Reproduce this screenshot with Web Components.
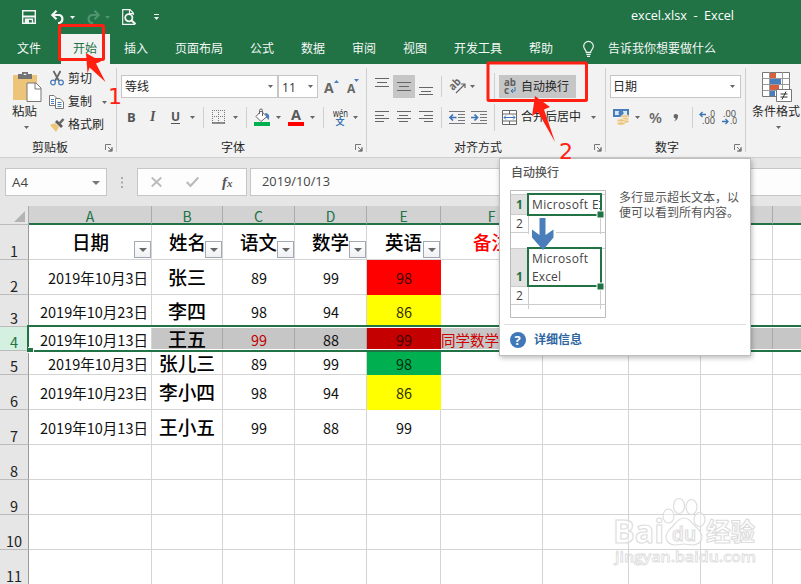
<!DOCTYPE html>
<html lang="zh-CN">
<head>
<meta charset="utf-8">
<title>excel.xlsx - Excel</title>
<style>
body{margin:0;width:801px;height:584px;overflow:hidden;font:12px/16px "Open Sans","Noto Sans CJK SC",sans-serif;color:#262626;background:#fff}
</style>
</head>
<body>
<xl-window></xl-window>
<script>
const define=(name,css,html,after)=>customElements.define(name,class extends HTMLElement{
  constructor(){super();this.attachShadow({mode:'open'});}
  connectedCallback(){
    this.shadowRoot.innerHTML=`<style>:host{display:block;box-sizing:border-box}*{box-sizing:border-box}${css}</style>`+(typeof html==='function'?html(this):html);
    if(after)after(this);
  }
});
// Lays out items left to right; each item is [x, width, markup], gaps become margins.
const row=(x0,h,items,cls='')=>{let x=x0;return `<div class="row ${cls}" style="height:${h}px">`+items.map(([a,w,m])=>{const g=a-x;x=a+w;return `<div class="it" style="margin-left:${g}px;width:${w}px">${m}</div>`}).join('')+'</div>'};
const rowCss='.row{display:flex;align-items:center;white-space:nowrap}.it{flex:none;display:flex;align-items:center;justify-content:flex-start}svg{display:block;flex:none;overflow:visible}';
const T=(s,w,st='')=>`<fit-text w="${w}" style="${st}">${s}</fit-text>`;
const svg=(w,h,c)=>`<svg width="${w}" height="${h}" viewBox="0 0 ${w} ${h}" fill="none">${c}</svg>`;
const dd=(c='#666')=>svg(5,3,`<path d="M0 0h5L2.5 3z" fill="${c}"/>`);
const vsep=h=>`<div style="width:1px;height:${h}px;background:#d0d0d0"></div>`;
const lines=(spec,h=16,w=14)=>svg(w,h,spec.map(([x,y,l])=>`<path d="M${x} ${y+.5}h${l}" stroke="#666"/>`).join(''));
const launcher=svg(8,8,'<path d="M.5 6V.5H6M3 3l4 4M7 3v4H3" stroke="#777"/><path d="M7.5 3.5v4h-4z" fill="#777"/>');

define('xl-titlebar','svg{color:#fff}:host{background:#217346;height:34px;color:#fff}'+rowCss,
 row(0,34,[
  [22,14,svg(14,14,'<path d="M.7.7h12.6v12.6H.7z" stroke="#f5f5f5" stroke-width="1.4"/><path d="M1 6.5h12" stroke="#f5f5f5" stroke-width="2"/><path d="M3.5 13V9.3h7V13" stroke="#f5f5f5" stroke-width="1.4"/><path d="M4 10h3v3H4z" fill="#f5f5f5"/>')],
  [51,14,svg(14,14,'<path d="M2 5h6.5a4.2 4.2 0 0 1 0 8H7" stroke="#f5f5f5" stroke-width="2.2"/><path d="M5.5.7 1.3 5l4.2 4.3" stroke="#f5f5f5" stroke-width="2.2"/>')],
  [70,5,dd('#f5f5f5')],
  [86,14,svg(14,14,'<path d="M12 5H5.5a4.2 4.2 0 0 0 0 8H7" stroke="#4f9470" stroke-width="2.2"/><path d="M8.5.7 12.7 5 8.5 9.3" stroke="#4f9470" stroke-width="2.2"/>')],
  [105,5,dd('#4f9470')],
  [122,14,svg(14,16,'<path d="M13 15.3H.7V.7H8l3.3 3.3v2M7.5 1v3.5H11" stroke="#f5f5f5" stroke-width="1.2"/><circle cx="6.8" cy="8.7" r="3.6" stroke="#f5f5f5" stroke-width="1.8"/><path d="m9.5 11.3 4 4" stroke="#f5f5f5" stroke-width="2.2"/>')],
  [154,5,svg(5,6,'<path d="M0 .5h5" stroke="#f5f5f5"/><path d="M0 3h5L2.5 6z" fill="#f5f5f5"/>')],
  [631,104,'<div style="padding-bottom:3px">'+T('excel.xlsx&nbsp; -&nbsp; Excel',103)+'</div>']
 ]));

const tab=(x,s,w)=>[x,w,T(s,w)];
define('xl-tabs',':host{background:#217346;height:30px;color:#f4f8f5}'+rowCss+'.on{background:#f2f2f2;color:#217346;width:49px;height:30px;display:flex;align-items:center;padding-left:12px}.row{padding-bottom:1px}',
 row(0,30,[
  tab(17,'文件',24),[61,49,'<div class="on" style="position:relative;top:.5px">'+T('开始',24)+'</div>'],tab(124,'插入',24),tab(175,'页面布局',48),tab(250,'公式',24),tab(301,'数据',24),tab(352,'审阅',24),tab(403,'视图',24),tab(454,'开发工具',48),tab(529,'帮助',24),
  [583,12,svg(11,16,'<path d="M3.3 11.3C3.3 9 .7 8 .7 5.2a4.8 4.8 0 0 1 9.6 0c0 2.8-2.6 3.8-2.6 6.1zM3.3 13.3h4.4M4 15.3h3" stroke="#f4f8f5" stroke-width="1.2"/>')],
  tab(608,'告诉我你想要做什么',108)
 ]));

define('xl-group',`:host{height:84px;flex:none;border-right:1px solid #cfcfcf}`,'<slot></slot>');

const gpaste='<svg width="28" height="30" viewBox="0 0 28 30" style="display:block"><path d="M0 3h24v25H0z" fill="#edc578"/><path d="M5 2h4V0h6v2h4v5H5z" fill="#737373"/><path d="M10.5 3a1.5 1.5 0 0 1 3 0" fill="#f2f2f2"/><path d="M14 11h9l5 5v13.500H14z" fill="#fff" stroke="#777"/><path d="M22 11v6h6" fill="none" stroke="#777"/></svg>';
define('xl-clipboard',rowCss+`:host{display:block}.top{display:flex;height:71px}.p{width:37px;padding:4px 0 0 12px;margin-right:12px;flex:none}`,
 `<div class="top"><div class="p"><div style="margin-left:1px">${gpaste}</div><div style="margin-top:2px">${T('粘贴',25)}</div><div style="padding:6px 0 0 12px">${dd()}</div></div>
 <div class="r">${row(49,21,[[50,14,svg(14,15,'<path d="m3.500 0 5.500 10M10.500 0 5 10" stroke="#666" stroke-width="1.8"/><circle cx="3" cy="11.500" r="2.300" stroke="#4a7ebb" stroke-width="1.300"/><circle cx="11" cy="11.500" r="2.300" stroke="#4a7ebb" stroke-width="1.300"/>')],[68,24,T('剪切',24)]])}
 ${row(49,26,[[49,16,svg(15,14,'<path d="M.5.5H5l2.500 2.500v7.500H.5z" fill="#fff" stroke="#777"/><path d="M6.500 3.500H11l3.500 3.500v6.500h-8z" fill="#fff" stroke="#777"/><path d="M2 4.500h3M2 6.500h3M2 8.500h3M8.500 7.500h4M8.500 9.500h4M8.500 11.500h4" stroke="#4a7ebb"/>')],[68,24,T('复制',24)],[102,5,dd()]])}
 ${row(49,20,[[50,15,svg(15,14,'<path d="M0 7 5 5l4 4-3 5z" fill="#edc578"/><path d="m5 4 2-2 6 6-2 2z" fill="#5c5c5c"/><path d="m9 6 4.500-5" stroke="#666" stroke-width="2.500"/>')],[68,36,T('格式刷',36)]])}</div></div>
 ${row(0,18,[[32,36,T('剪贴板',36)],[105,8,launcher]])}`);

define('xl-font',rowCss+`.box{height:23px;background:#fff;border:1px solid #c6c6c6;display:flex;align-items:center;padding:0 4px 0 3px;justify-content:space-between;width:100%}
 .b{font:bold 13px/16px "Open Sans";color:#555}.r2{margin-top:7px}.g{margin-top:10px}.pin{display:flex;flex-direction:column;align-items:center;width:16px;line-height:9px}`,
 `<div style="height:7px"></div>`+row(117,23,[
  [121,157,'<div class="box">'+T('等线',24)+dd()+'</div>'],[278,40,'<div class="box">'+T('11',14,'font-size:13px;color:#333')+dd()+'</div>'],
  [324,10,`<b style="font:bold 14px/16px 'Open Sans';color:#666;padding-top:2px">A</b>`],[334,5,'<div style="padding-bottom:11px">'+svg(5,3,'<path d="M0 3h5L2.500 0z" fill="#4a7ebb"/>')+'</div>'],
  [347,7,`<b style="font:bold 12px/16px 'Open Sans';color:#666;padding-top:4px">A</b>`],[354,5,'<div style="padding-bottom:13px">'+dd('#4a7ebb')+'</div>']
 ])+row(117,24,[
  [127,9,'<b class="b">B</b>'],[149,9,'<i style="font:italic bold 14px/16px \'Liberation Serif\';color:#555;margin-left:1px">I</i>'],[171,9,'<span class="b" style="border-bottom:1px solid #555;line-height:13px;font-size:12px">U</span>'],[190,5,dd()],[203,1,vsep(21)],
  [212,14,svg(13,14,'<path d="M0 .5h13M0 6.500h13M.5 0v13M6.500 0v13M12.500 0v13" stroke="#777" stroke-dasharray="1 1"/><path d="M0 13h13" stroke="#555" stroke-width="1.300"/>')],[233,5,dd()],[246,1,vsep(21)],
  [254,16,svg(16,16,'<path d="m7 2 6 5.500-6 5L2 7.500z" fill="#fff" stroke="#666"/><path d="M5.500 5V1.500a1.500 1.500 0 0 1 3 0V7" stroke="#666"/><path d="M11 4c4 0 5 3 3.500 7L12 8z" fill="#4a7ebb"/><path d="M0 13h16v4H0z" fill="#00b050"/>')],[276,5,dd()],
  [288,16,svg(16,16,'<path d="M0 13h16v4H0z" fill="red"/><text x="3" y="11" font-family="Open Sans" font-weight="bold" font-size="14" fill="#595959" textLength="10" lengthAdjust="spacingAndGlyphs">A</text>')],[310,5,dd()],[323,1,vsep(21)],
  [332,16,`<div class="pin">${T('wén',15,'font-size:10px;line-height:8px')}<span style="font-size:9px;color:#3b74b5;font-weight:bold;font-family:'Noto Sans CJK SC'">文</span></div>`],[353,5,dd()]
 ],'r2')+row(117,18,[[221,24,T('字体',24)],[355,8,launcher]],'g'));

define('xl-align',rowCss+`.r2{margin-top:7px}.g{margin-top:10px}.on{background:#c6c6c6;height:23px;display:flex;align-items:center;width:100%}`,
 `<div style="height:7px"></div>`+row(367,23,[
  [375,14,lines([[0,0,14],[2,4,10],[0,8,14]],17)],[393,22,'<div class="on" style="padding-left:4px">'+lines([[0,0,14],[2,4,10],[0,8,14]],9)+'</div>'],[419,14,lines([[0,8,14],[2,12,10],[0,15,14]],16)],
  [441,1,vsep(21)],[449,17,svg(17,15,'<g transform="translate(4 12) rotate(-45)"><text x="0" y="0" font-size="11" font-weight="bold" font-family="Open Sans" fill="#666" textLength="12" lengthAdjust="spacingAndGlyphs">ab</text></g><path d="m7 14 9-9M12 5h4v4" stroke="#666" stroke-width="1.200"/>')],[470,5,dd()],[494,1,vsep(27)],
  [499,77,`<div class="on">${row(499,23,[[503,14,svg(14,15,'<g font-family="Open Sans" font-weight="bold" font-size="10" fill="#5f5f5f"><text x="1" y="7" textLength="12" lengthAdjust="spacingAndGlyphs">ab</text><text x="1" y="14.500">c</text></g><path d="M12 8v4H8M10 10l-2 2 2 2" stroke="#3b74b5"/>')],[521,48,T('自动换行',48)]])}</div>`]
 ])+row(367,24,[
  [375,14,lines([[0,0,14],[0,4,9],[0,7,14],[0,10,9]],12)],[397,14,lines([[0,0,14],[2,4,9],[0,7,14],[2,10,9]],12)],[419,14,lines([[0,0,14],[5,4,9],[0,7,14],[5,10,9]],12)],[441,1,vsep(21)],
  [449,16,svg(16,13,'<path d="M0 .5h16M9 3.500h7M9 6.500h7M9 9.500h7M0 12.500h16" stroke="#777"/><path d="M7.500 6.500H1M4 3.500l-3 3 3 3" stroke="#3b74b5" stroke-width="1.700"/>')],
  [471,16,svg(16,13,'<path d="M0 .5h16M9 3.500h7M9 6.500h7M9 9.500h7M0 12.500h16" stroke="#777"/><path d="M0 6.500h6.500M3.500 3.500l3 3-3 3" stroke="#3b74b5" stroke-width="1.700"/>')],[494,1,vsep(27)],
  [502,15,svg(15,15,'<path d="M.5.5h14v14H.5zM0 4h15M0 11h15M7.500 0v4M7.500 11v4" fill="#fff" stroke="#666"/><path d="M2 7.500h11M4 5.500l-2 2 2 2M11 5.500l2 2-2 2" stroke="#3b74b5"/>')],[521,60,T('合并后居中',60)],[591,5,dd()]
 ],'r2')+row(367,18,[[454,48,T('对齐方式',48)],[594,8,launcher]],'g'));

const dec=(a,b,l)=>svg(15,15,`<g font-family="Open Sans" font-size="9" fill="#444"><text x="${l?8:1}" y="7" textLength="${l?7:13}" lengthAdjust="spacingAndGlyphs">${a}</text><text x="${l?2:8}" y="14" textLength="${l?13:7}" lengthAdjust="spacingAndGlyphs">${b}</text></g>`+(l?'<path d="M6 4.500H0M2.500 2 0 4.500 2.500 7" stroke="#3b74b5" stroke-width="1.300"/>':'<path d="M0 11.500h6M3.500 9l2.500 2.500L3.500 14" stroke="#3b74b5" stroke-width="1.300"/>'));
define('xl-number',rowCss+`.r2{margin-top:7px}.g{margin-top:10px}.box{height:23px;background:#fff;border:1px solid #c6c6c6;display:flex;align-items:center;padding:0 5px 0 2px;justify-content:space-between;width:100%}`,
 `<div style="height:7px"></div>`+row(606,23,[[610,131,'<div class="box">'+T('日期',24)+dd()+'</div>']])+row(606,24,[
  [613,17,svg(16,16,'<path d="M0 0h16v8H0z" fill="#4a7ebb"/><path d="M2 2h12v4H2z" fill="#dce8f5"/><circle cx="8" cy="4" r="2.500" fill="#4a7ebb"/><g fill="#edc578" stroke="#f2f2f2" stroke-width=".7"><ellipse cx="12" cy="7.500" rx="4" ry="1.700"/><ellipse cx="12" cy="10" rx="4" ry="1.700"/><ellipse cx="12" cy="12.500" rx="4" ry="1.700"/><ellipse cx="8" cy="11.500" rx="4" ry="1.700"/><ellipse cx="8" cy="14.500" rx="4" ry="1.700"/></g>')],[635,5,dd()],
  [649,13,T('%',13,'font-size:15px;font-weight:600;color:#666')],[673,6,svg(6,9,'<path d="M3 1a2 2 0 0 1 2 2.500C5 6 3 8 .7 8.500 2 7.500 2.700 6.500 2.600 5.500A2.200 2.200 0 0 1 3 1z" fill="#666"/>')],[692,1,vsep(21)],
  [700,15,dec('.0','.00',1)],[722,15,dec('.00','.0',0)]
 ],'r2')+row(606,18,[[655,24,T('数字',24)],[734,8,launcher]],'g'));

define('xl-styles','svg{display:block}:host{padding:4px 0 0 6px}',
 `<div style="padding-left:10px">${svg(30,30,'<path d="M.5.5h27v24H.5z" fill="#fff" stroke="#777"/><path d="M8 1h6v5H8z" fill="#d65f3f"/><path d="M8 7h11v5H8z" fill="#4a7ebb"/><path d="M8 13h9v5H8z" fill="#d65f3f"/><path d="M8 19h5v5H8z" fill="#4a7ebb"/><path d="M.5 6.500h27M.5 12.500h27M.5 18.500h14M7.500 0v24M20.500 0v24" stroke="#999"/><path d="M14.500 17.500h15v12h-15z" fill="#fff" stroke="#777"/><path d="M18.500 22h7M18.500 25h7M24 19.500l-4 8" stroke="#333"/>')}</div><div style="margin-top:2px">${T('条件格式',48)}</div><div style="padding:6px 0 0 24px">${dd()}</div>`);

define('xl-ribbon',':host{height:94px;background:#f2f2f2;border-bottom:1px solid #d0d0d0;display:flex;padding-top:4px}xl-styles{flex:1}',
 `<xl-group style="width:117px"><xl-clipboard></xl-clipboard></xl-group><xl-group style="width:250px"><xl-font></xl-font></xl-group><xl-group style="width:239px"><xl-align></xl-align></xl-group><xl-group style="width:140px"><xl-number></xl-number></xl-group><xl-styles></xl-styles>`);

define('xl-formula-bar',rowCss+`:host{height:48px;background:#e6e6e6;padding-top:10px}.box{width:100%;height:28px;background:#fdfdfd;border:1px solid #c6c6c6;display:flex;align-items:center}`,
 row(0,28,[
  [5,102,'<div class="box" style="justify-content:space-between;padding:1px 6px 0">'+T('A4',16,'color:#444;font-size:12px')+svg(8,4,'<path d="M0 0h8L4 4z" fill="#777"/>')+'</div>'],
  [121,2,svg(2,11,'<path d="M0 0h2v2H0zM0 4.500h2v2H0zM0 9h2v2H0z" fill="#aaa"/>')],
  [137,110,'<div class="box">'+row(138,26,[[151,11,svg(11,10,'<path d="m.7.500 9.600 9M10.300.5.7 9.500" stroke="#bbb" stroke-width="1.800"/>')],[186,13,svg(13,10,'<path d="m.8 5 3.700 4L12.300.5" stroke="#bbb" stroke-width="2.200"/>')],[222,14,`<i style="font:italic bold 15px/16px 'Liberation Serif';color:#555">f<span style="font-size:11px">x</span></i>`]])+'</div>'],
  [250,560,'<div class="box" style="padding-left:11px">'+T('2019/10/13',68,'font-size:12.5px;color:#444')+'</div>']
 ]));

const cols=[['A',123],['B',71],['C',72],['D',72],['E',74],['F',102],['G',86],['H',72],['I',72],['',72]];
const heights=[35,35,32,24,24,35,35,35,35,35,35];
const data=[
 ['日期','姓名','语文','数学','英语','备注'],
 ['2019年10月3日','张三','89','99','98'],['2019年10月23日','李四','98','94','86'],['2019年10月13日','王五','99','88','99','同学数学'],
 ['2019年10月3日','张儿三','89','99','98'],['2019年10月23日','李小四','98','94','86'],['2019年10月13日','王小五','99','88','99']];
const fills={1:'#f00',2:'#ff0',3:'#c40000',4:'#00b050',5:'#ff0'};
define('xl-cell',`:host{border-right:1px solid #d4d4d4;border-bottom:1px solid #d4d4d4;display:flex;align-items:center;justify-content:center;position:relative;white-space:nowrap;font:15px/20px "Noto Sans CJK SC",sans-serif;color:#111;overflow:visible;padding-top:2px}
 :host([kind=date]){justify-content:flex-end;padding-right:3px}
 :host([kind=name]){font-size:19px;font-weight:500;color:#000;padding-top:0}
 :host([kind=head]){font-size:19px;font-weight:500;color:#000;padding:0}
 .f{position:absolute;right:0;bottom:1px;width:17px;height:17px;border:1px solid #a3a9b3;background:linear-gradient(#fff,#f0f1f4);display:flex;align-items:center;justify-content:center}`,
 e=>'<slot></slot>'+(e.hasAttribute('filter')?'<span class="f">'+svg(8,4,'<path d="M0 0h8L4 4z" fill="#666"/>')+'</span>':''));

const cell=(r,c)=>{
 const v=(data[r]||[])[c]||'';let kind='',s='',t='';
 if(v){
  if(r===0){kind='head';t=T(v,37);if(c===5)s+='color:red;'}
  else if(c===0){kind='date';t=T(v,v.length>10?108:100)}
  else if(c===1){kind='name';t=T(v,v.length*19-(v.length>2?1:0))}
  else if(c===5){t=T(v,58);s+='color:#d00000;justify-content:flex-start;'}
  else t=T(v,16);
 }
 if(c===4&&fills[r])s+=`background:${fills[r]};border-color:${fills[r]};color:#400000;`+(r===4?'color:#002a10;':r===2||r===5?'color:#332f00;':'');
 if(r===3&&c>0&&c!==4)s+='background:#c6c6c6;border-right-color:#a8a8a8;';
 if(r===3&&c===2)s+='color:#c00000;';
 return `<xl-cell kind="${kind}" style="${s}" ${r===0&&c<5?'filter':''}>${t}</xl-cell>`;
};
define('xl-sheet',`:host{display:grid;position:relative;grid-template-columns:29px ${cols.map(c=>c[1]+'px').join(' ')};grid-template-rows:19px ${heights.map(h=>h+'px').join(' ')};height:378px;overflow:hidden;background:#fff}
 .ch{background:#d2d2d2;border-right:1px solid #ababab;border-bottom:2px solid #217346;color:#217346;text-align:center;font:14px/20px "Noto Sans CJK SC"}
 .rh{background:#e6e6e6;border-right:1px solid #999;border-bottom:1px solid #bbb;display:flex;align-items:flex-end;justify-content:center;font:14.5px/16px "Noto Sans CJK SC";color:#222}
 .corner{background:#e6e6e6;border-right:1px solid #ababab;border-bottom:1px solid #bbb;padding:5px 3px 0 14px}
 .sel{position:absolute;left:27px;top:119px;width:800px;height:27px;border:2px solid #217346;box-shadow:inset 0 0 0 1px #fff}
 .handle{position:absolute;left:28px;top:141px;width:6px;height:6px;background:#217346;border:1px solid #fff;border-left:0}svg{display:block}`,
 '<div class="corner">'+svg(11,11,'<path d="M11 0v11H0z" fill="#b4b4b4"/>')+'</div>'+cols.map(c=>`<div class="ch">${c[0]}</div>`).join('')+
 heights.map((h,r)=>`<div class="rh" ${r===3?'style="background:#d3f0e0;color:#217346"':''}>${r+1}</div>`+cols.map((_,c)=>cell(r,c)).join('')).join('')+'<div class="sel"></div><div class="handle"></div>');

define('xl-tip',rowCss+`:host{position:absolute;left:499px;top:158px;width:252px;height:198px;background:#fff;border:1px solid #bebebe;box-shadow:1px 2px 5px #0004;padding:6px 4px 0 10px;color:#555;display:flex;flex-direction:column}
 .m{display:flex;margin-top:9px;gap:13px}.foot{border-top:1px solid #ddd;margin:6px 0 0 -6px;padding:7px 0 0 6px;display:flex;gap:8px;align-items:center}`,
 T('自动换行',48,'font-weight:500;margin-left:1px')+`<div class="m">`+svg(96,128,`<path d="M.5.5h95v127H.5z" fill="#fff" stroke="#bbb"/><path d="M1 4h17v21H1zM1 58h17v38H1z" fill="#e1e1e1"/><path d="M1 4.500h17M1 24.500h17M1 42.500h18M1 58.500h17M1 96.500h17M1 114.500h94M18.500 4v40M18.500 58v61M90.500 4v40M90.500 96v23M46 42.500h49M91 4.500h4M91 24.500h4M91 58.500h4M91 96.500h4" stroke="#ccc"/><path d="M18 4h73v21H18zM18 58h73v38H18z" fill="#fff" stroke="#217346" stroke-width="2"/><path d="M87 21h7v7h-7zM87 93h7v7h-7z" fill="#217346" stroke="#fff"/>
 <path d="M29.500 28h6v17l8-5.500v8L33 60 22 47.500v-8l7.500 5.500z" fill="#4a7ebb"/>
 <g font-family="Open Sans" font-size="12" fill="#444"><text x="22" y="19" textLength="56">Microsoft</text><text x="82" y="19">E</text><path d="M89.500 11v1M89.500 18v1" stroke="#555"/><text x="22" y="73" textLength="56">Microsoft</text><text x="22" y="91" textLength="29">Excel</text><text x="6" y="38">2</text><text x="6" y="110">2</text><text x="6" y="19" font-weight="bold" fill="#217346">1</text><text x="6" y="91" font-weight="bold" fill="#217346">1</text></g>`)+`<div>${T('多行显示超长文本，以',120,'line-height:15px;display:block')}${T('便可以看到所有内容。',120,'line-height:15px;display:block')}</div></div>
 <div class="foot">${svg(16,16,'<circle cx="8" cy="8" r="8" fill="#3f78b8"/><text x="4.600" y="12.500" fill="#fff" font-family="Open Sans" font-weight="bold" font-size="13">?</text>')}${T('详细信息',48,'font-weight:600;color:#2f669f')}</div>`);

define('xl-watermark',':host{position:absolute;left:610px;top:495px;opacity:.9}svg{display:block}',
 svg(160,80,`<g fill="#fff" fill-opacity=".55" stroke="#d9d9d9" stroke-width="1.100" font-family="Open Sans" font-weight="bold"><text x="3" y="48" font-size="33" textLength="51" lengthAdjust="spacingAndGlyphs">Bai</text>
 <ellipse cx="58.500" cy="21" rx="5.500" ry="7"/><ellipse cx="69" cy="11" rx="5.500" ry="7.500"/><ellipse cx="81.500" cy="12" rx="5.500" ry="7.500"/><ellipse cx="89.500" cy="24.500" rx="5.500" ry="7"/><path d="M74 23c6 0 8 5 12 9 5 4 9 11 3 16-5 4-10 1-15 1s-11 3-15-1c-6-5-2-12 3-16 4-4 6-9 12-9z"/>
 <text x="62" y="46" font-size="19" textLength="24" lengthAdjust="spacingAndGlyphs" font-weight="600">du</text><text x="96" y="46" font-family="Noto Sans CJK SC" font-size="25" textLength="49" lengthAdjust="spacingAndGlyphs">经验</text><text x="5" y="67" font-size="15" font-weight="600" stroke-width=".8" textLength="141" lengthAdjust="spacingAndGlyphs">jingyan.baidu.com</text></g>`));

define('xl-callouts',':host{position:absolute;inset:0;width:801px;height:584px}svg{display:block}',
 svg(801,584,`<g stroke="#ff2012" stroke-width="3"><rect x="59.500" y="25.500" width="44" height="34" rx="1"/><rect x="488" y="63" width="98.500" height="37.500" rx="1"/></g><g fill="#ff2012"><path d="m86 53 15 8.500-5 2L105.500 82 89.500 67.500l-2 6z"/><path d="m535 96 15 11-6 2.500L555 142l-17-30-6 4z"/></g><g fill="#ff2012" font-family="DejaVu Sans" font-size="22"><text x="108" y="104">1</text><text x="559" y="159">2</text></g>`));

define('xl-window',':host{position:relative;width:801px;height:584px;overflow:hidden}',
 '<xl-titlebar></xl-titlebar><xl-tabs></xl-tabs><xl-ribbon></xl-ribbon><xl-formula-bar></xl-formula-bar><xl-sheet></xl-sheet><xl-watermark></xl-watermark><xl-tip></xl-tip><xl-callouts></xl-callouts>');

// Text squeezed or stretched horizontally to the given width.
define('fit-text',':host{display:inline-block;white-space:nowrap;flex:none}span{display:inline-block;transform-origin:0 50%}','<span><slot></slot></span>',e=>{
 const s=e.shadowRoot.querySelector('span'),w=+e.getAttribute('w'),n=s.getBoundingClientRect().width;
 e.style.width=w+'px';if(n)s.style.transform=`scaleX(${w/n})`;
});
</script>
</body>
</html>
